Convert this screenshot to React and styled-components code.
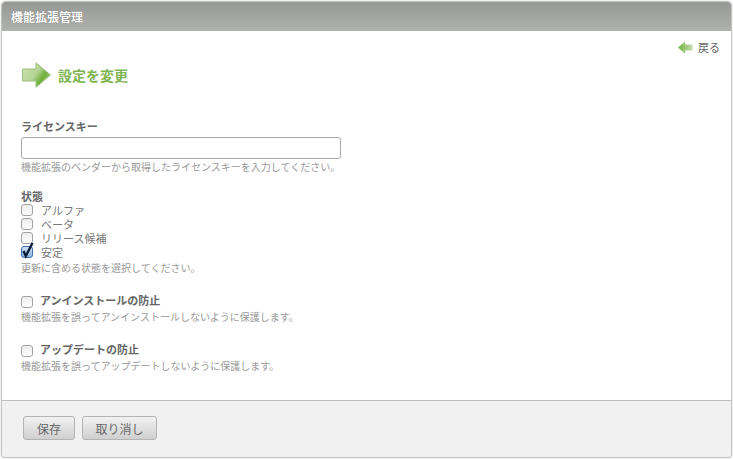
import styled, { createGlobalStyle } from "styled-components";

const GlobalStyle = createGlobalStyle`
    html, body {
        margin: 0;
        padding: 0;
        background: #fff;
    }
    body {
        font-family: "Liberation Sans", "Noto Sans CJK JP", sans-serif;
        font-size: 11px;
        color: #666;
    }
`

const Page = styled.div`
    width: 733px;
    height: 459px;
    padding: 2px;
    box-sizing: border-box;
    background: #fff;
`

const Panel = styled.div`
    width: 729px;
    height: 455px;
    box-sizing: border-box;
    border-radius: 4px 4px 3px 3px;
    box-shadow: 0 0 0 1px #c4c4c4, 0 0 3px #999;
    overflow: hidden;
    display: flex;
    flex-direction: column;
`

const Header = styled.div`
    height: 29px;
    flex: none;
    display: flex;
    align-items: center;
    padding: 0 9px;
    background: linear-gradient(#969895, #b0b2ae);
    color: #fff;
    font-size: 12px;
    font-weight: bold;
    text-shadow: 0 0 1px #666;
`

const Content = styled.div`
    flex: 1;
    padding: 9px 11px 0 19px;
`

const BackRow = styled.div`
    display: flex;
    justify-content: flex-end;
    align-items: center;
    gap: 5px;
    height: 14px;
    color: #666;
    font-size: 11px;
`

const TitleRow = styled.div`
    display: flex;
    align-items: center;
    gap: 6px;
    margin-top: 8px;
    height: 26px;
    padding-left: 1px;
`

const Title = styled.h2`
    margin: 0;
    font-size: 14px;
    font-weight: bold;
    color: #80b553;
`

const Field = styled.div`
    margin-top: ${(p) => p.$top}px;
`

const Label = styled.div`
    font-weight: bold;
    font-size: 11px;
    line-height: 14px;
    color: #666;
`

const GroupLabel = styled(Label)`
    margin-bottom: -1px;
`

const TextInput = styled.input`
    display: block;
    width: 320px;
    height: 22px;
    margin-top: 3px;
    padding: 0 4px;
    box-sizing: border-box;
    background: #fff;
    border: 1px solid #a9a9a9;
    border-radius: 3px;
    outline: none;
`

const Hint = styled.div`
    font-size: 10px;
    line-height: 14px;
    color: #999;
    margin-top: ${(p) => p.$top || 0}px;
`

const CheckRow = styled.label`
    display: flex;
    align-items: center;
    gap: 8px;
    height: 14px;
    font-size: 11px;
    color: #777;
`

const BoxWrap = styled.span`
    position: relative;
    display: block;
    width: 12px;
    height: 12px;
    flex: none;
`

const Box = styled.span`
    display: block;
    width: 12px;
    height: 12px;
    box-sizing: border-box;
    border-radius: 3px;
    border: 1px solid ${(p) => (p.$checked ? "#3f6fa8" : "#a3a3a3")};
    background: ${(p) =>
        p.$checked
            ? "linear-gradient(#cfe0f5, #8fb4e2)"
            : "linear-gradient(#ececec, #fff)"};
`

const Tick = styled.svg`
    position: absolute;
    left: 0;
    top: -4px;
`

const BoldCheck = styled(CheckRow)`
    font-weight: bold;
    color: #666;
    gap: 7px;
    ${BoxWrap} {
        margin-top: 4px;
    }
`

const Footer = styled.div`
    height: 57px;
    flex: none;
    display: flex;
    align-items: flex-start;
    gap: 7px;
    padding: 15px 0 0 21px;
    box-sizing: border-box;
    background: #f1f1f1;
    border-top: 1px solid #bdbdbd;
`

const Button = styled.button`
    height: 24px;
    width: ${(p) => p.$width}px;
    padding: 0;
    font-family: inherit;
    font-size: 12px;
    color: #666;
    background: linear-gradient(#f2f2f2, #cfcfcf);
    border: 1px solid #b4b4b4;
    border-radius: 3px;
`

const Check = ({ checked }) => (
    <BoxWrap>
        <Box $checked={checked} />
        {checked && (
            <Tick width="14" height="17" viewBox="0 0 14 17">
                <path d="M2.5 9 L4.8 14 L11.5 1" fill="none" stroke="#0d2038" strokeWidth="2.4" />
            </Tick>
        )}
    </BoxWrap>
);

const App = () => {
    return (
        <Page>
            <GlobalStyle />
            <Panel>
                <Header>機能拡張管理</Header>
                <Content>
                    <BackRow>
                        <svg width="15" height="13" viewBox="0 0 15 13">
                            <defs>
                                <linearGradient id="back" x1="0" x2="1" y1="0" y2="0">
                                    <stop offset="0" stopColor="#6fb03f" />
                                    <stop offset="1" stopColor="#c6dfae" />
                                </linearGradient>
                            </defs>
                            <path d="M0 6.5 L7 0.5 V3.5 H14.5 V9.5 H7 V12.5 Z" fill="url(#back)" />
                        </svg>
                        <span>戻る</span>
                    </BackRow>
                    <TitleRow>
                        <svg width="30" height="26" viewBox="0 0 30 26">
                            <defs>
                                <linearGradient id="big" x1="0" x2="1" y1="0" y2="0.6">
                                    <stop offset="0" stopColor="#cfe3b4" />
                                    <stop offset="0.55" stopColor="#b5d495" />
                                    <stop offset="0.8" stopColor="#6fae3a" />
                                    <stop offset="1" stopColor="#a6cc80" />
                                </linearGradient>
                            </defs>
                            <path
                                d="M0.5 7 H14 V0.8 L28.5 13 L14 25.2 V19 H0.5 Z"
                                fill="url(#big)"
                                stroke="#9cbf7c"
                            />
                        </svg>
                        <Title>設定を変更</Title>
                    </TitleRow>

                    <Field $top={32}>
                        <Label>ライセンスキー</Label>
                        <TextInput type="text" />
                        <Hint $top={2}>機能拡張のベンダーから取得したライセンスキーを入力してください。</Hint>
                    </Field>

                    <Field $top={15}>
                        <GroupLabel>状態</GroupLabel>
                        <CheckRow><Check />アルファ</CheckRow>
                        <CheckRow><Check />ベータ</CheckRow>
                        <CheckRow><Check />リリース候補</CheckRow>
                        <CheckRow><Check checked />安定</CheckRow>
                        <Hint $top={3}>更新に含める状態を選択してください。</Hint>
                    </Field>

                    <Field $top={17}>
                        <BoldCheck><Check />アンインストールの防止</BoldCheck>
                        <Hint $top={4}>機能拡張を誤ってアンインストールしないように保護します。</Hint>
                    </Field>

                    <Field $top={17}>
                        <BoldCheck><Check />アップデートの防止</BoldCheck>
                        <Hint $top={4}>機能拡張を誤ってアップデートしないように保護します。</Hint>
                    </Field>
                </Content>
                <Footer>
                    <Button $width={52}>保存</Button>
                    <Button $width={75}>取り消し</Button>
                </Footer>
            </Panel>
        </Page>
    );
};

export default App;
